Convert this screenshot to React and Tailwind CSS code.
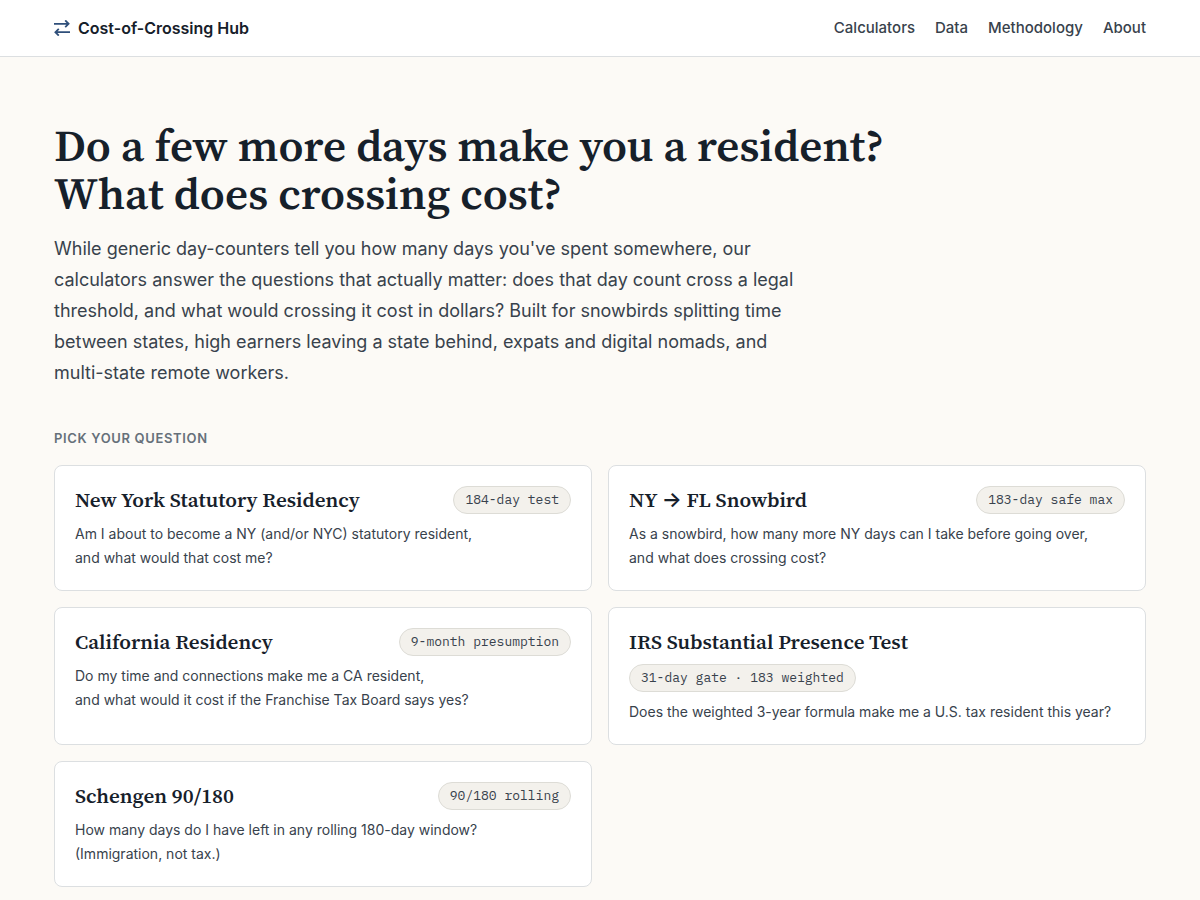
const NAV_LINKS = [
  { label: "Calculators", href: "#calculators" },
  { label: "Data", href: "#data" },
  { label: "Methodology", href: "#methodology" },
  { label: "About", href: "#about" },
];

const CALCULATORS = [
  {
    id: "new-york",
    title: "New York Statutory Residency",
    tag: "184-day test",
    lines: [
      "Am I about to become a NY (and/or NYC) statutory resident,",
      "and what would that cost me?",
    ],
  },
  {
    id: "snowbird",
    title: (
      <>
        NY <span className="font-[Inter,sans-serif]">→</span> FL Snowbird
      </>
    ),
    tag: "183-day safe max",
    lines: [
      "As a snowbird, how many more NY days can I take before going over,",
      "and what does crossing cost?",
    ],
  },
  {
    id: "california",
    title: "California Residency",
    tag: "9-month presumption",
    lines: [
      "Do my time and connections make me a CA resident,",
      "and what would it cost if the Franchise Tax Board says yes?",
    ],
  },
  {
    id: "irs",
    title: "IRS Substantial Presence Test",
    tag: "31-day gate · 183 weighted",
    lines: [
      "Does the weighted 3-year formula make me a U.S. tax resident this year?",
    ],
  },
  {
    id: "schengen",
    title: "Schengen 90/180",
    tag: "90/180 rolling",
    lines: [
      "How many days do I have left in any rolling 180-day window?",
      "(Immigration, not tax.)",
    ],
  },
];

const CrossingIcon = () => (
  <svg
    viewBox="0 0 16 16"
    className="h-4 w-4 text-[#2f4f7a]"
    fill="none"
    stroke="currentColor"
    strokeWidth="1.8"
    aria-hidden="true"
  >
    <path d="M0 3.8H14.6M11.2 0.4L14.6 3.8L11.2 7.2" />
    <path d="M16 12.2H1.4M4.8 8.8L1.4 12.2L4.8 15.6" />
  </svg>
);

const Header = () => (
  <header className="border-b border-[#dcdfe1] bg-white">
    <div className="mx-auto flex h-14 max-w-[1140px] items-center justify-between px-6">
      <a
        href="#home"
        className="flex items-center gap-2 font-semibold text-[#16202a]"
      >
        <CrossingIcon />
        Cost-of-Crossing Hub
      </a>
      <nav className="flex gap-5 text-[15px] font-medium text-[#38424c]">
        {NAV_LINKS.map((link) => (
          <a key={link.label} href={link.href}>
            {link.label}
          </a>
        ))}
      </nav>
    </div>
  </header>
);

const CalculatorCard = ({ calculator }) => (
  <a
    href={`#${calculator.id}`}
    className="block rounded-lg border border-[#dcdfe1] bg-white p-5"
  >
    <div className="flex flex-wrap items-center justify-between gap-2">
      <h3 className="font-['Source_Serif_4','Liberation_Serif',serif] text-[21px] leading-7 font-semibold text-[#16202a]">
        {calculator.title}
      </h3>
      <span className="rounded-full border border-[#dddcd6] bg-[#f3f1ec] px-[11px] font-['IBM_Plex_Mono','Liberation_Mono',monospace] text-[13px] leading-[26px] whitespace-nowrap">
        {calculator.tag}
      </span>
    </div>
    <p className="mt-2 text-sm leading-6">
      {calculator.lines.map((line) => (
        <span key={line} className="block">
          {line}
        </span>
      ))}
    </p>
  </a>
);

const App = () => (
  <div className="min-h-screen bg-[#fcfaf6] font-[Inter,'Liberation_Sans',sans-serif] text-[#38424c]">
    <Header />
    <main className="mx-auto max-w-[1140px] px-6 pt-16 pb-3">
      <h1 className="font-['Source_Serif_4','Liberation_Serif',serif] text-[45px] leading-[48px] font-semibold text-[#16202a]">
        Do a few more days make you a resident?
        <br />
        What does crossing cost?
      </h1>
      <p className="mt-4 max-w-[745px] text-lg leading-[31px]">
        While generic day-counters tell you how many days you've spent
        somewhere, our calculators answer the questions that actually matter:
        does that day count cross a legal threshold, and what would crossing it
        cost in dollars? Built for snowbirds splitting time between states, high
        earners leaving a state behind, expats and digital nomads, and
        multi-state remote workers.
      </p>
      <section id="calculators" className="mt-10">
        <h2 className="text-[13px] leading-[21px] font-semibold tracking-wider text-[#66707a] uppercase">
          Pick your question
        </h2>
        <div className="mt-4 grid grid-cols-1 gap-4 md:grid-cols-2">
          {CALCULATORS.map((calculator) => (
            <CalculatorCard key={calculator.id} calculator={calculator} />
          ))}
        </div>
      </section>
    </main>
  </div>
);

export default App;
